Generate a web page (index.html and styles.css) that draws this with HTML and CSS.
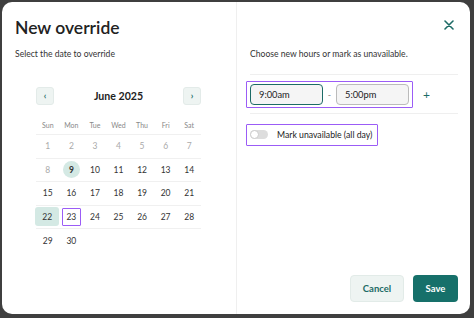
FILE: index.html
```html
<!DOCTYPE html>
<html>
<head>
<meta charset="utf-8">
<link rel="stylesheet" href="styles.css">
</head>
<body>
<div class="modal">
  <section class="left">
    <h1 class="title">New override</h1>
    <p class="sub">Select the date to override</p>
    <div class="cal">
      <div class="cal-head">
        <button class="nav">&#8249;</button>
        <div class="month">June 2025</div>
        <button class="nav">&#8250;</button>
      </div>
      <div class="row wk">
        <span>Sun</span><span>Mon</span><span>Tue</span><span>Wed</span><span>Thu</span><span>Fri</span><span>Sat</span>
      </div>
      <div class="row">
        <span class="d dim">1</span><span class="d dim">2</span><span class="d dim">3</span><span class="d dim">4</span><span class="d dim">5</span><span class="d dim">6</span><span class="d dim">7</span>
      </div>
      <div class="row">
        <span class="d dim">8</span><span class="d"><i class="today">9</i></span><span class="d">10</span><span class="d">11</span><span class="d">12</span><span class="d">13</span><span class="d">14</span>
      </div>
      <div class="row">
        <span class="d">15</span><span class="d">16</span><span class="d">17</span><span class="d">18</span><span class="d">19</span><span class="d">20</span><span class="d">21</span>
      </div>
      <div class="row">
        <span class="d"><i class="sel">22</i></span><span class="d"><i class="focus">23</i></span><span class="d">24</span><span class="d">25</span><span class="d">26</span><span class="d">27</span><span class="d">28</span>
      </div>
      <div class="row last">
        <span class="d">29</span><span class="d">30</span>
      </div>
    </div>
  </section>
  <section class="right">
    <div class="top">
      <button class="close" aria-label="Close">
        <svg width="10" height="10" viewBox="0 0 10 10"><path d="M1 1L9 9M9 1L1 9" stroke="#1d6b66" stroke-width="1.6" stroke-linecap="round"/></svg>
      </button>
    </div>
    <p class="sub">Choose new hours or mark as unavailable.</p>
    <div class="hours">
      <div class="range">
        <div class="time active">9:00am</div>
        <span class="dash">-</span>
        <div class="time">5:00pm</div>
      </div>
      <span class="plus">+</span>
    </div>
    <div class="unavail">
      <div class="outline2">
        <span class="toggle"><i></i></span>
        <span class="ulabel">Mark unavailable (all day)</span>
      </div>
    </div>
    <div class="actions">
      <button class="btn cancel">Cancel</button>
      <button class="btn save">Save</button>
    </div>
  </section>
</div>
</body>
</html>
```
FILE: styles.css
```css
* { box-sizing: border-box; }
html, body { margin: 0; padding: 0; }
body {
  width: 474px;
  height: 318px;
  background: #3f3f3f;
  font-family: Lato, "Noto Sans", sans-serif;
  color: #222;
  padding: 2px 4px 4px 2px;
  overflow: hidden;
}
.modal {
  width: 468px;
  height: 312px;
  background: #fff;
  border-radius: 10px;
  display: grid;
  grid-template-columns: 234px 1fr;
  overflow: hidden;
}
.left {
  padding: 14px 0 0 13px;
}
.title {
  margin: 0;
  font-size: 17.5px;
  font-weight: 600;
  line-height: 24px;
  color: #222;
}
.sub {
  margin: 0;
  font-size: 8.6px;
  line-height: 14px;
  color: #333;
}
.left .sub { margin-top: 7px; }
.cal {
  width: 165px;
  margin: 26px 0 0 21px;
}
.cal-head {
  display: flex;
  align-items: center;
  justify-content: space-between;
  height: 18px;
}
.nav {
  width: 18px;
  height: 18px;
  border: 1px solid #e3ebe9;
  background: #eef4f2;
  border-radius: 3px;
  padding: 0;
  font-size: 9px;
  line-height: 14px;
  color: #1d6b66;
  font-family: inherit;
  font-weight: 700;
}
.month {
  font-size: 10.6px;
  font-weight: 700;
  color: #222;
}
.row {
  display: grid;
  grid-template-columns: repeat(7, 1fr);
  height: 23.5px;
  align-items: center;
  border-bottom: 1px solid #f0f0f0;
}
.row.last { border-bottom: none; }
.wk {
  margin-top: 16px;
  height: 14px;
  align-items: start;
}
.wk span {
  text-align: center;
  font-size: 7px;
  line-height: 9px;
  color: #888;
}
.d {
  text-align: center;
  font-size: 8.5px;
  color: #333;
  display: flex;
  justify-content: center;
  align-items: center;
}
.d.dim { color: #aaa; }
.d i { font-style: normal; display: flex; align-items: center; justify-content: center; }
.today {
  width: 17px;
  height: 17px;
  border-radius: 50%;
  background: #d4e9e4;
  font-weight: 700;
}
.sel {
  width: 24px;
  height: 19px;
  border-radius: 3px;
  background: #d4e9e4;
  margin-left: -1px;
}
.focus {
  width: 19px;
  height: 18px;
  border: 1.5px solid #9b5cf6;
  border-radius: 1px;
}
.right {
  border-left: 1px solid #efefef;
  padding: 0 12px 0 13px;
  display: flex;
  flex-direction: column;
}
.top {
  display: flex;
  justify-content: flex-end;
  height: 40px;
  padding-top: 17px;
}
.close {
  background: none;
  border: none;
  padding: 0;
  width: 12px;
  height: 12px;
  margin-right: 3px;
  margin-top: -1px;
}
.right .sub {
  margin-top: 5px;
  padding-bottom: 13px;
  border-bottom: 1px solid #efefef;
}
.hours {
  display: flex;
  align-items: center;
  padding: 6px 0 5px 0;
  border-bottom: 1px solid #efefef;
}
.range {
  display: flex;
  align-items: center;
  border: 1.5px solid #9b5cf6;
  border-radius: 1px;
  padding: 2px 3px;
  margin-left: -4px;
}
.time {
  width: 73px;
  height: 21px;
  border: 1px solid #bbb;
  border-radius: 4px;
  background: #f5f5f5;
  font-size: 9.3px;
  line-height: 19px;
  padding-left: 8px;
  color: #222;
}
.time.active { border: 1.5px solid #1d6b66; }
.dash {
  width: 13px;
  text-align: center;
  font-size: 9px;
  color: #888;
}
.plus {
  margin-left: 10px;
  color: #1d6b66;
  font-size: 12px;
}
.unavail {
  padding-top: 9px;
}
.outline2 {
  display: inline-flex;
  align-items: center;
  border: 1.5px solid #9b5cf6;
  border-radius: 1px;
  height: 22px;
  padding: 0 5px 0 3px;
  margin-left: -4px;
}
.toggle {
  width: 18px;
  height: 9px;
  background: #ddd;
  border-radius: 5px;
  position: relative;
  display: inline-block;
}
.toggle i {
  position: absolute;
  left: 0;
  top: 0;
  width: 9px;
  height: 9px;
  border-radius: 50%;
  background: #fff;
  border: 1px solid #ccc;
}
.ulabel {
  margin-left: 9px;
  font-size: 8.7px;
  color: #222;
}
.actions {
  margin-top: auto;
  margin-bottom: 12px;
  display: flex;
  justify-content: flex-end;
  gap: 9px;
}
.btn {
  height: 27px;
  border-radius: 4px;
  font-family: inherit;
  font-weight: 700;
  font-size: 9.5px;
  padding: 0;
}
.cancel {
  width: 54px;
  background: #eef4f2;
  border: 1px solid #e2ebe8;
  color: #1d6b66;
}
.save {
  width: 45px;
  background: #16706a;
  border: none;
  color: #fff;
}
```
